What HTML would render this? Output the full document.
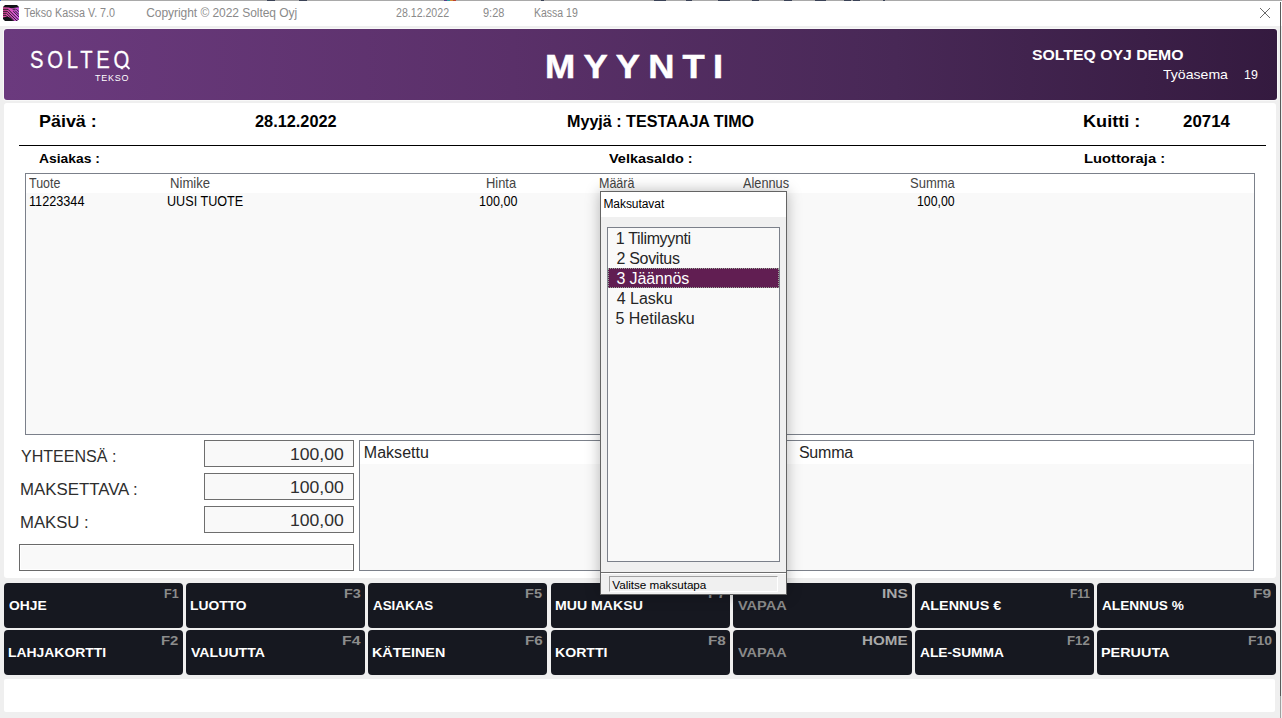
<!DOCTYPE html>
<html><head><meta charset="utf-8"><style>
html,body{margin:0;padding:0;}
body{width:1282px;height:718px;position:relative;overflow:hidden;background:#efefef;font-family:"Liberation Sans", sans-serif;}
.t{position:absolute;white-space:nowrap;}
.b{position:absolute;}
</style></head><body>
<div class="b" style="left:0px;top:0px;width:1282px;height:26px;background:#fff;"></div>
<div class="b" style="left:0px;top:0px;width:1282px;height:1px;background:#a9a9a9;"></div>
<div class="b" style="left:267px;top:0px;width:8px;height:1px;background:#3a4256;"></div>
<div class="b" style="left:299px;top:0px;width:8px;height:1px;background:#3a4256;"></div>
<div class="b" style="left:444px;top:0px;width:3px;height:1px;background:#5a3d8a;"></div>
<div class="b" style="left:447px;top:0px;width:3px;height:1px;background:#2a9aa0;"></div>
<div class="b" style="left:450px;top:0px;width:3px;height:1px;background:#d08a30;"></div>
<div class="b" style="left:453px;top:0px;width:3px;height:1px;background:#c04030;"></div>
<div class="b" style="left:541px;top:0px;width:3px;height:1px;background:#3a4256;"></div>
<div class="b" style="left:654px;top:0px;width:12px;height:1px;background:#3a4256;"></div>
<div class="b" style="left:686px;top:0px;width:6px;height:1px;background:#3a4256;"></div>
<div class="b" style="left:718px;top:0px;width:12px;height:1px;background:#3a4256;"></div>
<div class="b" style="left:752px;top:0px;width:7px;height:1px;background:#3a4256;"></div>
<div class="b" style="left:784px;top:0px;width:8px;height:1px;background:#3a4256;"></div>
<div class="b" style="left:815px;top:0px;width:11px;height:1px;background:#3a4256;"></div>
<div class="b" style="left:844px;top:0px;width:7px;height:1px;background:#3a4256;"></div>
<div class="b" style="left:853px;top:0px;width:7px;height:1px;background:#3a4256;"></div>
<div class="b" style="left:883px;top:0px;width:2px;height:1px;background:#3a4256;"></div>
<div class="b" style="left:0px;top:0px;width:1px;height:1px;background:#2a5ab8;"></div>
<svg class="b" style="left:3px;top:5px" width="16" height="16" viewBox="0 0 16 16">
<defs><linearGradient id="ig" x1="0" x2="1" y1="0" y2="0"><stop offset="0" stop-color="#e84a9c"/><stop offset="1" stop-color="#cf5ee8"/></linearGradient>
<clipPath id="ic"><path d="M2 0 H14 L16 2 V14 L14 16 H2 L0 14 V2 Z"/></clipPath></defs>
<g clip-path="url(#ic)">
<rect x="0" y="0" width="16" height="16" fill="#111317"/>
<path d="M0 2.2 L6 2.6 Q8 3.9 10 2.9 L16 2.2 V16 H10.5 Q7 12 4 11.6 L0 12.4 Z" fill="url(#ig)"/>
<path d="M0 4.3 H5 L16.5 15.8 M0 6.3 H4.2 L14 16.1 M0 8.3 H3.6 L11.5 16.2 M0 10.3 H3 L9 16.3 M9.6 4.2 H12.6 M13.4 4.2 L16 6.8 M10.2 6 L16 11.8 M12 5.6 L16 9.6" stroke="#111317" stroke-width="0.9" fill="none"/>
</g></svg>
<div class="t" style="left:24.30px;top:6.64px;font-size:12px;line-height:12px;color:#8a8a8a;transform:scaleX(0.8961);transform-origin:0 0;">Tekso Kassa V. 7.0</div>
<div class="t" style="left:146.20px;top:6.64px;font-size:12px;line-height:12px;color:#8a8a8a;letter-spacing:-0.050px;">Copyright © 2022 Solteq Oyj</div>
<div class="t" style="left:396.40px;top:6.64px;font-size:12px;line-height:12px;color:#8a8a8a;transform:scaleX(0.8833);transform-origin:0 0;">28.12.2022</div>
<div class="t" style="left:483.00px;top:6.64px;font-size:12px;line-height:12px;color:#8a8a8a;transform:scaleX(0.9130);transform-origin:0 0;">9:28</div>
<div class="t" style="left:533.52px;top:6.64px;font-size:12px;line-height:12px;color:#8a8a8a;transform:scaleX(0.8755);transform-origin:0 0;">Kassa 19</div>
<svg class="b" style="left:1259px;top:7px" width="12" height="12" viewBox="0 0 12 12">
<path d="M1 1 L11 11 M11 1 L1 11" stroke="#6a6a6a" stroke-width="1"/></svg>
<div class="b" style="left:3px;top:28px;width:1275px;height:73px;background:#f8f8f8;border-radius:4px;"></div>
<div class="b" style="left:4px;top:29px;width:1273px;height:71px;background:linear-gradient(90deg,#6b3a7e 0%,#5a3069 40%,#482856 70%,#341a3f 100%);border-radius:3px;"></div>
<div class="t" style="left:30.34px;top:48.71px;font-size:23.5px;line-height:23.5px;color:#fff;letter-spacing:4.344px;transform:scaleX(0.86);transform-origin:0 0;-webkit-text-stroke:0.3px #fff;clip-path:inset(0 0 3px 0);">SOLTEQ</div>
<svg class="b" style="left:120px;top:60px" width="12" height="12"><path d="M5 4.5 L9.5 9" stroke="#fff" stroke-width="1.8"/></svg>
<div class="t" style="left:95.00px;top:74.08px;font-size:9px;line-height:9px;color:#fff;letter-spacing:0.750px;">TEKSO</div>
<div class="t" style="left:545.40px;top:49.87px;font-size:33px;line-height:33px;color:#fff;letter-spacing:7.436px;transform:scaleX(1.1);transform-origin:0 0;font-weight:bold;-webkit-text-stroke:0.5px #fff;">MYYNTI</div>
<div class="t" style="left:1032.10px;top:48.82px;font-size:13.8px;line-height:13.8px;color:#fff;transform:scaleX(1.1447);transform-origin:0 0;font-weight:bold;">SOLTEQ OYJ DEMO</div>
<div class="t" style="left:1163.30px;top:68.96px;font-size:12.8px;line-height:12.8px;color:#fff;transform:scaleX(1.1000);transform-origin:0 0;">Työasema</div>
<div class="t" style="left:1244.23px;top:68.96px;font-size:12.8px;line-height:12.8px;color:#fff;transform:scaleX(0.9692);transform-origin:0 0;">19</div>
<div class="b" style="left:4px;top:103px;width:1272px;height:475px;background:#fff;border-radius:3px;"></div>
<div class="t" style="left:38.51px;top:113.13px;font-size:16.5px;line-height:16.5px;color:#000;transform:scaleX(1.0863);transform-origin:0 0;font-weight:bold;">Päivä :</div>
<div class="t" style="left:255.00px;top:113.03px;font-size:16.5px;line-height:16.5px;color:#000;transform:scaleX(0.9878);transform-origin:0 0;font-weight:bold;">28.12.2022</div>
<div class="t" style="left:566.82px;top:113.23px;font-size:16.5px;line-height:16.5px;color:#000;transform:scaleX(0.9768);transform-origin:0 0;font-weight:bold;">Myyjä : TESTAAJA TIMO</div>
<div class="t" style="left:1082.60px;top:113.13px;font-size:16.5px;line-height:16.5px;color:#000;transform:scaleX(1.0980);transform-origin:0 0;font-weight:bold;">Kuitti :</div>
<div class="t" style="left:1183.00px;top:113.13px;font-size:16.5px;line-height:16.5px;color:#000;transform:scaleX(1.0217);transform-origin:0 0;font-weight:bold;">20714</div>
<div class="b" style="left:19px;top:145px;width:1247px;height:1px;background:#000;"></div>
<div class="t" style="left:39.00px;top:152.54px;font-size:12px;line-height:12px;color:#000;transform:scaleX(1.1538);transform-origin:0 0;font-weight:bold;">Asiakas :</div>
<div class="t" style="left:609.20px;top:152.64px;font-size:12px;line-height:12px;color:#000;transform:scaleX(1.2058);transform-origin:0 0;font-weight:bold;">Velkasaldo :</div>
<div class="t" style="left:1083.60px;top:152.64px;font-size:12px;line-height:12px;color:#000;transform:scaleX(1.2292);transform-origin:0 0;font-weight:bold;">Luottoraja :</div>
<div class="b" style="left:25px;top:173px;width:1230px;height:262px;background:#f9f9f9;border:1px solid #7b808a;box-sizing:border-box;"></div>
<div class="b" style="left:26px;top:174px;width:1228px;height:19px;background:#fff;"></div>
<div class="t" style="left:28.90px;top:177.03px;font-size:13.9px;line-height:13.9px;color:#444;transform:scaleX(0.8943);transform-origin:0 0;">Tuote</div>
<div class="t" style="left:169.56px;top:177.03px;font-size:13.9px;line-height:13.9px;color:#444;transform:scaleX(0.9439);transform-origin:0 0;">Nimike</div>
<div class="t" style="left:486.37px;top:177.03px;font-size:13.9px;line-height:13.9px;color:#444;transform:scaleX(0.9281);transform-origin:0 0;">Hinta</div>
<div class="t" style="left:598.60px;top:177.03px;font-size:13.9px;line-height:13.9px;color:#444;transform:scaleX(0.9000);transform-origin:0 0;">Määrä</div>
<div class="t" style="left:742.50px;top:177.03px;font-size:13.9px;line-height:13.9px;color:#444;transform:scaleX(0.9180);transform-origin:0 0;">Alennus</div>
<div class="t" style="left:909.76px;top:177.03px;font-size:13.9px;line-height:13.9px;color:#444;transform:scaleX(0.9362);transform-origin:0 0;">Summa</div>
<div class="t" style="left:29.09px;top:194.45px;font-size:14px;line-height:14px;color:#000;transform:scaleX(0.9050);transform-origin:0 0;">11223344</div>
<div class="t" style="left:166.50px;top:194.45px;font-size:14px;line-height:14px;color:#000;transform:scaleX(0.9012);transform-origin:0 0;">UUSI TUOTE</div>
<div class="t" style="left:479.10px;top:194.45px;font-size:14px;line-height:14px;color:#000;transform:scaleX(0.8976);transform-origin:0 0;">100,00</div>
<div class="t" style="left:917.12px;top:194.45px;font-size:14px;line-height:14px;color:#000;transform:scaleX(0.8810);transform-origin:0 0;">100,00</div>
<div class="t" style="left:20.80px;top:449.39px;font-size:15.6px;line-height:15.6px;color:#2e2e2e;transform:scaleX(1.0283);transform-origin:0 0;">YHTEENSÄ :</div>
<div class="b" style="left:204px;top:440px;width:150px;height:27px;background:#f9f9f9;border:1px solid #6e6e6e;box-sizing:border-box;"></div>
<div class="t" style="left:289.73px;top:445.93px;font-size:16.5px;line-height:16.5px;color:#2e2e2e;transform:scaleX(1.0653);transform-origin:0 0;">100,00</div>
<div class="t" style="left:19.72px;top:482.39px;font-size:15.6px;line-height:15.6px;color:#2e2e2e;transform:scaleX(1.0785);transform-origin:0 0;">MAKSETTAVA :</div>
<div class="b" style="left:204px;top:473px;width:150px;height:27px;background:#f9f9f9;border:1px solid #6e6e6e;box-sizing:border-box;"></div>
<div class="t" style="left:289.73px;top:478.93px;font-size:16.5px;line-height:16.5px;color:#2e2e2e;transform:scaleX(1.0653);transform-origin:0 0;">100,00</div>
<div class="t" style="left:19.73px;top:515.39px;font-size:15.6px;line-height:15.6px;color:#2e2e2e;transform:scaleX(1.0710);transform-origin:0 0;">MAKSU :</div>
<div class="b" style="left:204px;top:506px;width:150px;height:27px;background:#f9f9f9;border:1px solid #6e6e6e;box-sizing:border-box;"></div>
<div class="t" style="left:289.73px;top:511.93px;font-size:16.5px;line-height:16.5px;color:#2e2e2e;transform:scaleX(1.0653);transform-origin:0 0;">100,00</div>
<div class="b" style="left:19px;top:544px;width:335px;height:27px;background:#f9f9f9;border:1px solid #6a6a6a;box-sizing:border-box;box-shadow:inset 0 0 0 1px #fff;"></div>
<div class="b" style="left:359px;top:440px;width:895px;height:131px;background:#f9f9f9;border:1px solid #7b808a;box-sizing:border-box;"></div>
<div class="b" style="left:360px;top:441px;width:893px;height:23px;background:#fff;"></div>
<div class="t" style="left:363.80px;top:444.96px;font-size:16px;line-height:16px;color:#262626;letter-spacing:0.029px;">Maksettu</div>
<div class="t" style="left:798.90px;top:444.96px;font-size:16px;line-height:16px;color:#262626;letter-spacing:-0.200px;">Summa</div>
<div class="b" style="left:4px;top:583px;width:179px;height:45px;background:#161820;border-radius:4px;"></div>
<div class="t" style="left:9.20px;top:599.52px;font-size:12.5px;line-height:12.5px;color:#fff;transform:scaleX(1.1059);transform-origin:0 0;font-weight:bold;">OHJE</div>
<div class="t" style="left:163.83px;top:587.78px;font-size:12.9px;line-height:12.9px;color:#8c8c8c;transform:scaleX(0.9714);transform-origin:0 0;font-weight:bold;">F1</div>
<div class="b" style="left:186px;top:583px;width:179px;height:45px;background:#161820;border-radius:4px;"></div>
<div class="t" style="left:190.09px;top:599.52px;font-size:12.5px;line-height:12.5px;color:#fff;transform:scaleX(1.1060);transform-origin:0 0;font-weight:bold;">LUOTTO</div>
<div class="t" style="left:343.69px;top:587.78px;font-size:12.9px;line-height:12.9px;color:#8c8c8c;transform:scaleX(1.1143);transform-origin:0 0;font-weight:bold;">F3</div>
<div class="b" style="left:368px;top:583px;width:179px;height:45px;background:#161820;border-radius:4px;"></div>
<div class="t" style="left:373.20px;top:599.52px;font-size:12.5px;line-height:12.5px;color:#fff;transform:scaleX(1.0714);transform-origin:0 0;font-weight:bold;">ASIAKAS</div>
<div class="t" style="left:525.47px;top:587.78px;font-size:12.9px;line-height:12.9px;color:#8c8c8c;transform:scaleX(1.1286);transform-origin:0 0;font-weight:bold;">F5</div>
<div class="b" style="left:551px;top:583px;width:179px;height:45px;background:#161820;border-radius:4px;"></div>
<div class="t" style="left:555.07px;top:599.52px;font-size:12.5px;line-height:12.5px;color:#fff;transform:scaleX(1.1303);transform-origin:0 0;font-weight:bold;">MUU MAKSU</div>
<div class="t" style="left:707.61px;top:587.78px;font-size:12.9px;line-height:12.9px;color:#8c8c8c;transform:scaleX(1.1857);transform-origin:0 0;font-weight:bold;">F7</div>
<div class="b" style="left:733px;top:583px;width:179px;height:45px;background:#161820;border-radius:4px;"></div>
<div class="t" style="left:738.20px;top:599.52px;font-size:12.5px;line-height:12.5px;color:#8a8a8a;transform:scaleX(1.1619);transform-origin:0 0;font-weight:bold;">VAPAA</div>
<div class="t" style="left:882.20px;top:587.78px;font-size:12.9px;line-height:12.9px;color:#a8a8a8;transform:scaleX(1.2000);transform-origin:0 0;font-weight:bold;">INS</div>
<div class="b" style="left:915px;top:583px;width:179px;height:45px;background:#161820;border-radius:4px;"></div>
<div class="t" style="left:920.20px;top:599.52px;font-size:12.5px;line-height:12.5px;color:#fff;transform:scaleX(1.1465);transform-origin:0 0;font-weight:bold;">ALENNUS €</div>
<div class="t" style="left:1069.87px;top:587.78px;font-size:12.9px;line-height:12.9px;color:#8c8c8c;transform:scaleX(0.9300);transform-origin:0 0;font-weight:bold;">F11</div>
<div class="b" style="left:1097px;top:583px;width:179px;height:45px;background:#161820;border-radius:4px;"></div>
<div class="t" style="left:1102.20px;top:599.52px;font-size:12.5px;line-height:12.5px;color:#fff;transform:scaleX(1.0920);transform-origin:0 0;font-weight:bold;">ALENNUS %</div>
<div class="t" style="left:1253.29px;top:587.78px;font-size:12.9px;line-height:12.9px;color:#8c8c8c;transform:scaleX(1.2071);transform-origin:0 0;font-weight:bold;">F9</div>
<div class="b" style="left:4px;top:630px;width:179px;height:45px;background:#161820;border-radius:4px;"></div>
<div class="t" style="left:8.09px;top:646.52px;font-size:12.5px;line-height:12.5px;color:#fff;transform:scaleX(1.1126);transform-origin:0 0;font-weight:bold;">LAHJAKORTTI</div>
<div class="t" style="left:161.04px;top:634.78px;font-size:12.9px;line-height:12.9px;color:#8c8c8c;transform:scaleX(1.1571);transform-origin:0 0;font-weight:bold;">F2</div>
<div class="b" style="left:186px;top:630px;width:179px;height:45px;background:#161820;border-radius:4px;"></div>
<div class="t" style="left:191.20px;top:646.52px;font-size:12.5px;line-height:12.5px;color:#fff;transform:scaleX(1.1292);transform-origin:0 0;font-weight:bold;">VALUUTTA</div>
<div class="t" style="left:341.97px;top:634.78px;font-size:12.9px;line-height:12.9px;color:#8c8c8c;transform:scaleX(1.2286);transform-origin:0 0;font-weight:bold;">F4</div>
<div class="b" style="left:368px;top:630px;width:179px;height:45px;background:#161820;border-radius:4px;"></div>
<div class="t" style="left:372.05px;top:646.52px;font-size:12.5px;line-height:12.5px;color:#fff;transform:scaleX(1.1468);transform-origin:0 0;font-weight:bold;">KÄTEINEN</div>
<div class="t" style="left:524.61px;top:634.78px;font-size:12.9px;line-height:12.9px;color:#8c8c8c;transform:scaleX(1.1857);transform-origin:0 0;font-weight:bold;">F6</div>
<div class="b" style="left:551px;top:630px;width:179px;height:45px;background:#161820;border-radius:4px;"></div>
<div class="t" style="left:555.07px;top:646.52px;font-size:12.5px;line-height:12.5px;color:#fff;transform:scaleX(1.1289);transform-origin:0 0;font-weight:bold;">KORTTI</div>
<div class="t" style="left:707.61px;top:634.78px;font-size:12.9px;line-height:12.9px;color:#8c8c8c;transform:scaleX(1.1857);transform-origin:0 0;font-weight:bold;">F8</div>
<div class="b" style="left:733px;top:630px;width:179px;height:45px;background:#161820;border-radius:4px;"></div>
<div class="t" style="left:738.20px;top:646.52px;font-size:12.5px;line-height:12.5px;color:#8a8a8a;transform:scaleX(1.1619);transform-origin:0 0;font-weight:bold;">VAPAA</div>
<div class="t" style="left:861.52px;top:634.78px;font-size:12.9px;line-height:12.9px;color:#a8a8a8;transform:scaleX(1.1763);transform-origin:0 0;font-weight:bold;">HOME</div>
<div class="b" style="left:915px;top:630px;width:179px;height:45px;background:#161820;border-radius:4px;"></div>
<div class="t" style="left:920.20px;top:646.52px;font-size:12.5px;line-height:12.5px;color:#fff;transform:scaleX(1.0987);transform-origin:0 0;font-weight:bold;">ALE-SUMMA</div>
<div class="t" style="left:1066.77px;top:634.78px;font-size:12.9px;line-height:12.9px;color:#8c8c8c;transform:scaleX(1.0286);transform-origin:0 0;font-weight:bold;">F12</div>
<div class="b" style="left:1097px;top:630px;width:179px;height:45px;background:#161820;border-radius:4px;"></div>
<div class="t" style="left:1101.05px;top:646.52px;font-size:12.5px;line-height:12.5px;color:#fff;transform:scaleX(1.1517);transform-origin:0 0;font-weight:bold;">PERUUTA</div>
<div class="t" style="left:1247.51px;top:634.78px;font-size:12.9px;line-height:12.9px;color:#8c8c8c;transform:scaleX(1.0857);transform-origin:0 0;font-weight:bold;">F10</div>
<div class="b" style="left:4px;top:679px;width:1271px;height:33px;background:#fff;border-radius:2px;"></div>
<div class="b" style="left:1280px;top:2px;width:1px;height:694px;background:#5a5a5a;"></div>
<div class="b" style="left:1280px;top:696px;width:1px;height:22px;background:#a0a0a0;"></div>
<div class="b" style="left:600px;top:191px;width:187px;height:404px;background:#f0f0f0;border:1px solid #646464;box-sizing:border-box;box-shadow:0 0 14px rgba(0,0,0,0.28);"></div>
<div class="b" style="left:601px;top:192px;width:185px;height:25px;background:#fff;"></div>
<div class="t" style="left:603.40px;top:197.64px;font-size:12px;line-height:12px;color:#000;letter-spacing:-0.056px;">Maksutavat</div>
<div class="b" style="left:607px;top:227px;width:173px;height:335px;background:#f9f9f9;border:1px solid #7b808a;box-sizing:border-box;"></div>
<div class="t" style="left:615.80px;top:231.26px;font-size:16px;line-height:16px;color:#262626;letter-spacing:-0.345px;">1 Tilimyynti</div>
<div class="t" style="left:616.40px;top:251.26px;font-size:16px;line-height:16px;color:#262626;letter-spacing:-0.287px;">2 Sovitus</div>
<div class="b" style="left:608px;top:268px;width:171px;height:20px;background:#611e52;outline:1px dotted #9a9;outline-offset:-1px;"></div>
<div class="t" style="left:616.40px;top:271.26px;font-size:16px;line-height:16px;color:#fff;letter-spacing:-0.112px;">3 Jäännös</div>
<div class="t" style="left:616.80px;top:291.26px;font-size:16px;line-height:16px;color:#262626;letter-spacing:-0.033px;">4 Lasku</div>
<div class="t" style="left:615.40px;top:311.26px;font-size:16px;line-height:16px;color:#262626;letter-spacing:0.020px;">5 Hetilasku</div>
<div class="b" style="left:601px;top:572px;width:185px;height:1px;background:#6e6e6e;"></div>
<div class="b" style="left:601px;top:573px;width:185px;height:1px;background:#fff;"></div>
<div class="b" style="left:609px;top:576px;width:169px;height:16px;background:#f0f0f0;border-top:1px solid #a0a0a0;border-left:1px solid #a0a0a0;border-bottom:1px solid #fff;border-right:1px solid #fff;box-sizing:border-box;"></div>
<div class="t" style="left:612.30px;top:578.80px;font-size:11.7px;line-height:11.7px;color:#000;letter-spacing:-0.037px;">Valitse maksutapa</div>
</body></html>
